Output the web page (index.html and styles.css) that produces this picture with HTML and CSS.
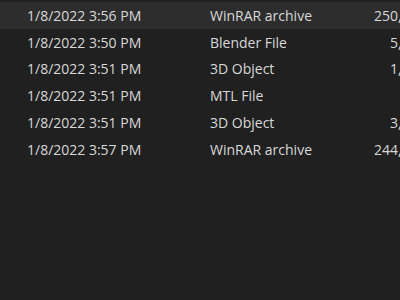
FILE: index.html
```html
<!DOCTYPE html>
<html>
<head>
<meta charset="utf-8">
<link rel="stylesheet" href="styles.css">
</head>
<body>
<div class="list">
  <div class="row selected"><span class="date">1/8/2022 3:56 PM</span><span class="type">WinRAR archive</span><span class="size">250,236 KB</span></div>
  <div class="row"><span class="date">1/8/2022 3:50 PM</span><span class="type">Blender File</span><span class="size">5,410 KB</span></div>
  <div class="row"><span class="date">1/8/2022 3:51 PM</span><span class="type">3D Object</span><span class="size">1,702 KB</span></div>
  <div class="row"><span class="date">1/8/2022 3:51 PM</span><span class="type">MTL File</span><span class="size">1 KB</span></div>
  <div class="row"><span class="date">1/8/2022 3:51 PM</span><span class="type">3D Object</span><span class="size">3,118 KB</span></div>
  <div class="row"><span class="date">1/8/2022 3:57 PM</span><span class="type">WinRAR archive</span><span class="size">244,870 KB</span></div>
</div>
</body>
</html>
```
FILE: styles.css
```css
html, body {
  margin: 0;
  padding: 0;
  background: #202020;
  overflow: hidden;
  width: 400px;
  height: 300px;
}
body {
  font-family: "Open Sans", "Noto Sans", sans-serif;
  font-size: 14px;
  color: #d8d8d8;
}
.list {
  padding-top: 2px;
  width: 460px;
}
.row {
  display: flex;
  align-items: center;
  height: 26.8px;
  white-space: nowrap;
}
.row.selected {
  background: #2d2d2d;
}
.date {
  box-sizing: border-box;
  width: 210px;
  padding-left: 27px;
  flex: none;
}
.type {
  width: 140px;
  flex: none;
}
.size {
  width: 97px;
  text-align: right;
  flex: none;
}
```
